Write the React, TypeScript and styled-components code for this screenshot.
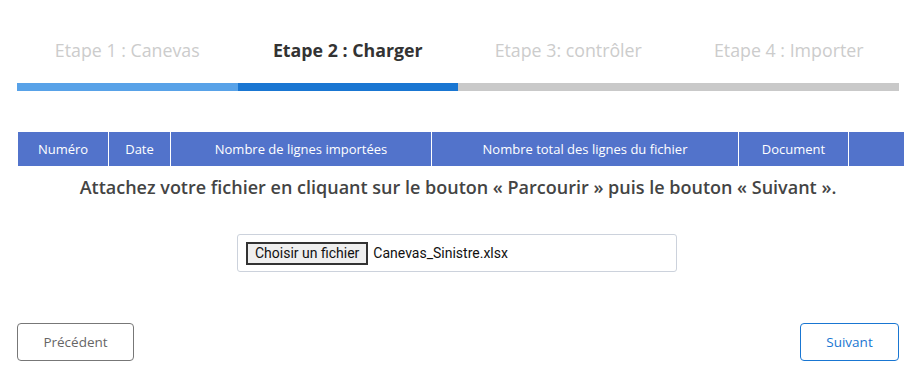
import styled, { createGlobalStyle } from "styled-components";

const steps = [
  { label: "Etape 1 : Canevas", state: "done" },
  { label: "Etape 2 : Charger", state: "current" },
  { label: "Etape 3: contrôler", state: "todo" },
  { label: "Etape 4 : Importer", state: "todo" },
] as const;

type StepState = (typeof steps)[number]["state"];

const columns = [
  { title: "Numéro", width: 90 },
  { title: "Date", width: 61 },
  { title: "Nombre de lignes importées", width: 260 },
  { title: "Nombre total des lignes du fichier", width: 306 },
  { title: "Document", width: 109 },
  { title: "", width: 55 },
];

export default function App() {
  return (
    <>
      <GlobalStyle />
      <Page>
        <Stepper>
          {steps.map((step) => (
            <Step key={step.label}>
              <StepLabel $state={step.state}>{step.label}</StepLabel>
              <StepBar $state={step.state} />
            </Step>
          ))}
        </Stepper>

        <HistoryTable>
          <thead>
            <tr>
              {columns.map((col, i) => (
                <HeadCell key={i} style={{ width: col.width }}>
                  {col.title}
                </HeadCell>
              ))}
            </tr>
          </thead>
        </HistoryTable>

        <Instruction>
          Attachez votre fichier en cliquant sur le bouton « Parcourir » puis
          le bouton « Suivant ».
        </Instruction>

        <UploadRow>
          <FileBox>
            <ChooseButton>Choisir un fichier</ChooseButton>
            <FileName>Canevas_Sinistre.xlsx</FileName>
          </FileBox>
        </UploadRow>

        <Actions>
          <NavButton $variant="secondary">Précédent</NavButton>
          <NavButton $variant="primary">Suivant</NavButton>
        </Actions>
      </Page>
    </>
  );
}

const GlobalStyle = createGlobalStyle`
  body {
    margin: 0;
    background: #ffffff;
    font-family: "Open Sans", "Liberation Sans", sans-serif;
  }
`;

const Page = styled.div`
  width: 916px;
  padding: 0 17px;
  box-sizing: border-box;
`;

const Stepper = styled.div`
  display: grid;
  grid-template-columns: repeat(4, 1fr);
  padding-top: 38px;
`;

const Step = styled.div`
  display: flex;
  flex-direction: column;
  align-items: center;
`;

const StepLabel = styled.div<{ $state: StepState }>`
  font-size: 17.8px;
  line-height: 25px;
  font-weight: ${(p) => (p.$state === "current" ? 700 : 400)};
  color: ${(p) => (p.$state === "current" ? "#333333" : "#cccccc")};
  margin-bottom: 20px;
`;

const StepBar = styled.div<{ $state: StepState }>`
  align-self: stretch;
  height: 8px;
  background: ${(p) =>
    p.$state === "done"
      ? "#58a2e8"
      : p.$state === "current"
      ? "#1976d2"
      : "#c9c9c9"};
`;

const HistoryTable = styled.table`
  width: 881px;
  margin-top: 41px;
  margin-left: 1px;
  border-collapse: collapse;
  table-layout: fixed;
`;

const HeadCell = styled.th`
  height: 34px;
  padding: 0;
  background: #5273cb;
  color: #ffffff;
  font-size: 13px;
  font-weight: 400;
  text-align: center;
  border-left: 1px solid #ffffff;

  &:first-child {
    border-left: none;
  }
`;

const Instruction = styled.p`
  margin: 9px 0 0;
  text-align: center;
  font-size: 18px;
  line-height: 24px;
  font-weight: 600;
  color: #444444;
`;

const UploadRow = styled.div`
  display: flex;
  justify-content: center;
  margin-top: 35px;
  padding-right: 2px;
`;

const FileBox = styled.div`
  width: 440px;
  height: 38px;
  box-sizing: border-box;
  display: flex;
  align-items: center;
  gap: 5px;
  padding: 0 8px;
  border: 1px solid #ccd2dc;
  border-radius: 3px;
  font-family: Roboto, "Liberation Sans", sans-serif;
  font-size: 14px;
  color: #111111;
`;

const ChooseButton = styled.span`
  display: inline-flex;
  align-items: center;
  height: 23px;
  box-sizing: border-box;
  padding: 0 7px;
  background: #efefef;
  border: 2px solid #333333;
  color: #111111;
`;

const FileName = styled.span`
  color: #111111;
`;

const Actions = styled.div`
  display: flex;
  justify-content: space-between;
  margin-top: 51px;
`;

const NavButton = styled.button<{ $variant: "primary" | "secondary" }>`
  height: 38px;
  padding: 0;
  width: ${(p) => (p.$variant === "primary" ? "99px" : "117px")};
  background: #ffffff;
  border: 1px solid
    ${(p) => (p.$variant === "primary" ? "#1976d2" : "#777777")};
  border-radius: 4px;
  color: ${(p) => (p.$variant === "primary" ? "#1976d2" : "#666666")};
  font-family: "Open Sans", "Liberation Sans", sans-serif;
  font-size: 13.5px;
  font-weight: 400;
`;
